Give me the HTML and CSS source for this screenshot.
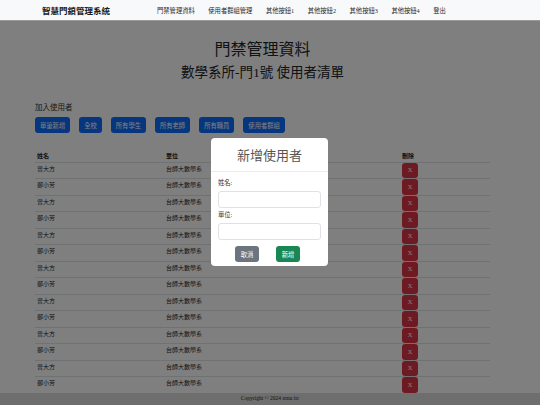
FILE: index.html
```html
<!DOCTYPE html>
<html lang="zh-Hant">
<head>
<meta charset="utf-8">
<title>智慧門鎖管理系統</title>
<link rel="stylesheet" href="styles.css">
</head>
<body>
<nav class="navbar">
  <span class="brand">智慧門鎖管理系統</span>
  <ul class="nav-links">
    <li>門禁管理資料</li>
    <li>使用者群組管理</li>
    <li>其他按鈕1</li>
    <li>其他按鈕2</li>
    <li>其他按鈕3</li>
    <li>其他按鈕4</li>
    <li>登出</li>
  </ul>
</nav>
<main class="main">
  <h1 class="title">門禁管理資料</h1>
  <h2 class="subtitle">數學系所-門1號 使用者清單</h2>
  <div class="add-section">
    <div class="add-label">加入使用者</div>
    <div class="btn-row">
      <span class="btn btn-primary">單筆新增</span>
      <span class="btn btn-primary">全校</span>
      <span class="btn btn-primary">所有學生</span>
      <span class="btn btn-primary">所有老師</span>
      <span class="btn btn-primary">所有職員</span>
      <span class="btn btn-primary">使用者群組</span>
    </div>
  </div>
  <table class="user-table">
    <thead>
      <tr><th class="c-name">姓名</th><th class="c-unit">單位</th><th class="c-del">刪除</th></tr>
    </thead>
    <tbody>
      <tr><td>曾大方</td><td>台師大數學系</td><td><span class="btn-del">X</span></td></tr>
      <tr><td>鄭小芳</td><td>台師大數學系</td><td><span class="btn-del">X</span></td></tr>
      <tr><td>曾大方</td><td>台師大數學系</td><td><span class="btn-del">X</span></td></tr>
      <tr><td>鄭小芳</td><td>台師大數學系</td><td><span class="btn-del">X</span></td></tr>
      <tr><td>曾大方</td><td>台師大數學系</td><td><span class="btn-del">X</span></td></tr>
      <tr><td>鄭小芳</td><td>台師大數學系</td><td><span class="btn-del">X</span></td></tr>
      <tr><td>曾大方</td><td>台師大數學系</td><td><span class="btn-del">X</span></td></tr>
      <tr><td>鄭小芳</td><td>台師大數學系</td><td><span class="btn-del">X</span></td></tr>
      <tr><td>曾大方</td><td>台師大數學系</td><td><span class="btn-del">X</span></td></tr>
      <tr><td>鄭小芳</td><td>台師大數學系</td><td><span class="btn-del">X</span></td></tr>
      <tr><td>曾大方</td><td>台師大數學系</td><td><span class="btn-del">X</span></td></tr>
      <tr><td>鄭小芳</td><td>台師大數學系</td><td><span class="btn-del">X</span></td></tr>
      <tr><td>曾大方</td><td>台師大數學系</td><td><span class="btn-del">X</span></td></tr>
      <tr><td>鄭小芳</td><td>台師大數學系</td><td><span class="btn-del">X</span></td></tr>
    </tbody>
  </table>
</main>
<footer class="footer">Copyright © 2024 ntnu itc</footer>

<div class="backdrop"></div>
<div class="modal">
  <div class="modal-header">新增使用者</div>
  <div class="modal-body">
    <label class="field-label">姓名:</label>
    <div class="input"></div>
    <label class="field-label">單位:</label>
    <div class="input"></div>
  </div>
  <div class="modal-footer">
    <span class="btn btn-secondary">取消</span>
    <span class="btn btn-success">新增</span>
  </div>
</div>
</body>
</html>
```

FILE: styles.css
```css
* { box-sizing: border-box; }

body {
  margin: 0;
  background: #fff;
  color: #212529;
  font-family: "Liberation Serif", "Noto Sans CJK TC", serif;
}

.navbar {
  position: relative;
  z-index: 1060;
  height: 21px;
  display: flex;
  align-items: center;
  padding-left: 42px;
  background: #f8f9fa;
  border-bottom: 1px solid #9a9a9a;
}

.brand {
  font-size: 8.5px;
  font-weight: bold;
  color: #1a1a1a;
  margin-right: 47px;
}

.nav-links {
  display: flex;
  gap: 13.5px;
  list-style: none;
  margin: 0;
  padding: 0;
  font-size: 6.3px;
  color: #2a2a2a;
}

.main {
  padding: 0 50px 0 35px;
}

.title {
  margin: 18px 0 0;
  text-align: center;
  font-size: 16px;
  line-height: 22px;
  font-weight: normal;
}

.subtitle {
  margin: 2px 0 0;
  text-align: center;
  font-size: 13.5px;
  line-height: 20px;
  font-weight: normal;
}

.add-section {
  margin-top: 19px;
}

.add-label {
  font-size: 7.5px;
  line-height: 11px;
  color: #333;
}

.btn-row {
  display: flex;
  gap: 9px;
  margin-top: 4px;
}

.btn {
  display: inline-flex;
  align-items: center;
  justify-content: center;
  height: 16px;
  padding: 0 5px;
  border-radius: 3px;
  font-size: 6.3px;
  color: #fff;
}

.btn-primary { background: #0d6efd; }
.btn-secondary { background: #6c757d; width: 24px; }
.btn-success { background: #198754; width: 24px; }

.user-table {
  width: 455px;
  margin-top: 16px;
  border-collapse: collapse;
  font-size: 6px;
}

.user-table th {
  text-align: left;
  font-weight: bold;
  height: 13px;
  padding: 0 2px;
  vertical-align: middle;
}

.user-table td {
  height: 15.5px;
  padding: 2px 2px 0;
  border-top: 1px solid #dee2e6;
  vertical-align: top;
  line-height: 8px;
}

.user-table td:last-child {
  padding-top: 0;
}

.c-name { width: 129px; }
.c-unit { width: 236px; }

.btn-del {
  display: flex;
  align-items: center;
  justify-content: center;
  width: 16px;
  height: 15.5px;
  border-radius: 3px;
  background: #dc3545;
  color: #fff;
  font-size: 6.5px;
}

.footer {
  height: 12px;
  background: #dcdcdc;
  text-align: center;
  font-size: 5.5px;
  line-height: 11px;
  color: #222;
}

.backdrop {
  position: fixed;
  inset: 0;
  z-index: 1050;
  background: rgba(0, 0, 0, 0.5);
}

.modal {
  position: fixed;
  z-index: 1055;
  top: 138px;
  left: 211px;
  width: 117px;
  height: 128px;
  background: #fff;
  border-radius: 4px;
  display: flex;
  flex-direction: column;
}

.modal-header {
  height: 34px;
  display: flex;
  align-items: center;
  justify-content: center;
  font-size: 13px;
  color: #555;
  border-bottom: 1px solid #e9ecef;
}

.modal-body {
  display: flex;
  flex-direction: column;
  padding: 6px 7px 0;
}

.field-label {
  font-size: 6.3px;
  line-height: 10px;
  color: #333;
  margin-bottom: 3px;
}

.input {
  height: 17px;
  border: 1px solid #dee2e6;
  border-radius: 3px;
  margin-bottom: 2px;
}

.modal-footer {
  display: flex;
  justify-content: center;
  gap: 17px;
  margin-top: 4px;
  padding-right: 4px;
}
```
